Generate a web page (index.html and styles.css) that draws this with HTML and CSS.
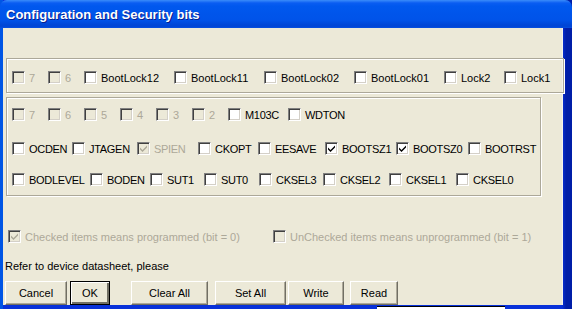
FILE: index.html
```html
<!DOCTYPE html>
<html lang="en">
<head>
  <meta charset="UTF-8">
  <title>Configuration and Security bits</title>
  <link rel="stylesheet" href="styles.css">
</head>
<body>
  <div class="window">
    <div class="titlebar">Configuration and Security bits</div>
    <div class="client">

      <div class="group group-lock">
        <div class="row row-lock">
          <label class="cb disabled"><span class="box"></span>7</label>
          <label class="cb disabled"><span class="box"></span>6</label>
          <label class="cb"><span class="box"></span>BootLock12</label>
          <label class="cb"><span class="box"></span>BootLock11</label>
          <label class="cb"><span class="box"></span>BootLock02</label>
          <label class="cb"><span class="box"></span>BootLock01</label>
          <label class="cb"><span class="box"></span>Lock2</label>
          <label class="cb"><span class="box"></span>Lock1</label>
        </div>
      </div>

      <div class="group group-fuse">
        <div class="row row-ext">
          <label class="cb disabled"><span class="box"></span>7</label>
          <label class="cb disabled"><span class="box"></span>6</label>
          <label class="cb disabled"><span class="box"></span>5</label>
          <label class="cb disabled"><span class="box"></span>4</label>
          <label class="cb disabled"><span class="box"></span>3</label>
          <label class="cb disabled"><span class="box"></span>2</label>
          <label class="cb"><span class="box"></span>M103C</label>
          <label class="cb"><span class="box"></span>WDTON</label>
        </div>
        <div class="row row-high">
          <label class="cb"><span class="box"></span>OCDEN</label>
          <label class="cb"><span class="box"></span>JTAGEN</label>
          <label class="cb disabled checked"><span class="box"><svg viewBox="0 0 7 7"><path d="M0 2.5 L2.5 5 L7 0.5 L7 2.5 L2.5 7 L0 4.5 Z"/></svg></span>SPIEN</label>
          <label class="cb"><span class="box"></span>CKOPT</label>
          <label class="cb"><span class="box"></span>EESAVE</label>
          <label class="cb checked"><span class="box"><svg viewBox="0 0 7 7"><path d="M0 2.5 L2.5 5 L7 0.5 L7 2.5 L2.5 7 L0 4.5 Z"/></svg></span>BOOTSZ1</label>
          <label class="cb checked"><span class="box"><svg viewBox="0 0 7 7"><path d="M0 2.5 L2.5 5 L7 0.5 L7 2.5 L2.5 7 L0 4.5 Z"/></svg></span>BOOTSZ0</label>
          <label class="cb"><span class="box"></span>BOOTRST</label>
        </div>
        <div class="row row-low">
          <label class="cb"><span class="box"></span>BODLEVEL</label>
          <label class="cb"><span class="box"></span>BODEN</label>
          <label class="cb"><span class="box"></span>SUT1</label>
          <label class="cb"><span class="box"></span>SUT0</label>
          <label class="cb"><span class="box"></span>CKSEL3</label>
          <label class="cb"><span class="box"></span>CKSEL2</label>
          <label class="cb"><span class="box"></span>CKSEL1</label>
          <label class="cb"><span class="box"></span>CKSEL0</label>
        </div>
      </div>

      <div class="legend">
        <label class="cb disabled checked"><span class="box"><svg viewBox="0 0 7 7"><path d="M0 2.5 L2.5 5 L7 0.5 L7 2.5 L2.5 7 L0 4.5 Z"/></svg></span>Checked items means programmed (bit = 0)</label>
        <label class="cb disabled"><span class="box"></span>UnChecked items means unprogrammed (bit = 1)</label>
      </div>

      <p class="hint">Refer to device datasheet, please</p>

      <div class="buttons">
        <button class="btn btn-cancel">Cancel</button>
        <button class="btn btn-ok default">OK</button>
        <button class="btn btn-clear">Clear All</button>
        <button class="btn btn-set">Set All</button>
        <button class="btn btn-write">Write</button>
        <button class="btn btn-read">Read</button>
      </div>
    </div>
    <div class="overlap"></div>
  </div>
</body>
</html>
```

FILE: styles.css
```css
body {
  margin: 0;
  width: 572px;
  height: 309px;
  overflow: hidden;
  font-family: "Liberation Sans", Arial, sans-serif;
  font-size: 11px;
  color: #000;
}
.window {
  position: relative;
  width: 572px;
  height: 309px;
  background: linear-gradient(90deg, #0055e5 0, #0055e5 3px, #0831d9 3px, #0831d9 562px, #001ea8 566px);
  display: flex;
  flex-direction: column;
}
.titlebar {
  height: 28px;
  flex: none;
  padding-left: 6px;
  line-height: 30px;
  color: #fff;
  font-size: 13px;
  font-weight: bold;
  text-shadow: 1px 1px #0a1e8c;
  border-radius: 7px 7px 0 0;
  background: linear-gradient(#3a8cfa 0, #0a5df2 3px, #0058ee 6px, #0055eb 14px, #0053e9 20px, #0046d6 25px, #0047d8 27px, #0a52e3 28px);
}
.client {
  flex: 1;
  margin: 0 9px 4px 3px;
  padding: 30px 0 0 3px;
  background: #ece9d8;
  display: flex;
  flex-direction: column;
  box-shadow: inset -1px 0 #f4f3ee;
}

/* etched group boxes */
.group {
  box-sizing: border-box;
  border: 1px solid #aca899;
  box-shadow: inset 1px 1px #fff, 1px 1px #fff;
}
.group-lock {
  width: 558px;
  height: 35px;
  padding-top: 11px;
}
.group-fuse {
  width: 535px;
  height: 99px;
  margin-top: 4px;
  padding-top: 9px;
}
.row {
  display: grid;
  height: 15px;
  padding-left: 5px;
  align-items: center;
}
.row-lock { grid-template-columns: 36px 36px 90px 90px 90px 90px 60px auto; }
.row-ext  { grid-template-columns: 36px 36px 36px 36px 36px 36px 60px auto; }
.row-high { grid-template-columns: 60px 65px 61px 60px 67px 71px 72px auto; margin-top: 19px; }
.row-low  { grid-template-columns: 78px 60px 54px 55px 64px 66px 67px auto; margin-top: 16px; }

/* checkboxes */
.cb {
  display: flex;
  align-items: center;
  white-space: nowrap;
  height: 15px;
}
.row-high .cb, .row-low .cb, .row-ext .cb { letter-spacing: -0.3px; }
.box {
  box-sizing: border-box;
  width: 13px;
  height: 13px;
  flex: none;
  margin-right: 4px;
  background: #fff;
  border-top: 1px solid #808080;
  border-left: 1px solid #808080;
  border-right: 1px solid #fff;
  border-bottom: 1px solid #fff;
  box-shadow: inset 1px 1px #404040, inset -1px -1px #d4d0c8;
  display: flex;
  align-items: center;
  justify-content: center;
}
.box svg {
  width: 7px;
  height: 7px;
  fill: #000;
}
.cb.disabled { color: #aca899; }
.cb.disabled .box { background: #ece9d8; }
.cb.disabled .box svg { fill: #aca899; }

.legend {
  display: grid;
  grid-template-columns: 265px auto;
  margin-top: 33px;
  padding-left: 2px;
}
.hint {
  margin: 15px 0 0 -1px;
  height: 14px;
  line-height: 14px;
}

/* buttons */
.buttons {
  display: flex;
  margin: 8px 0 0 -1px;
}
.btn {
  box-sizing: border-box;
  height: 24px;
  padding: 0;
  font-family: "Liberation Sans", Arial, sans-serif;
  font-size: 11px;
  color: #000;
  background: #ece9d8;
  border: 1px solid;
  border-color: #fff #716f64 #716f64 #fff;
  box-shadow: inset -1px -1px #aca899;
}
.btn.default {
  border: 1px solid #000;
  box-shadow: inset 1px 1px #fff, inset -2px -2px #716f64;
}
.btn-cancel { width: 62px; }
.btn-ok { width: 40px; margin-left: 3px; }
.btn-clear { width: 77px; margin-left: 21px; }
.btn-set { width: 71px; margin-left: 7px; }
.btn-write { width: 56px; margin-left: 2px; }
.btn-read { width: 48px; margin-left: 6px; }

.overlap {
  position: absolute;
  left: 377px;
  top: 306px;
  width: 128px;
  height: 3px;
  background: #fff;
  border-top: 1px solid #000;
}
```
